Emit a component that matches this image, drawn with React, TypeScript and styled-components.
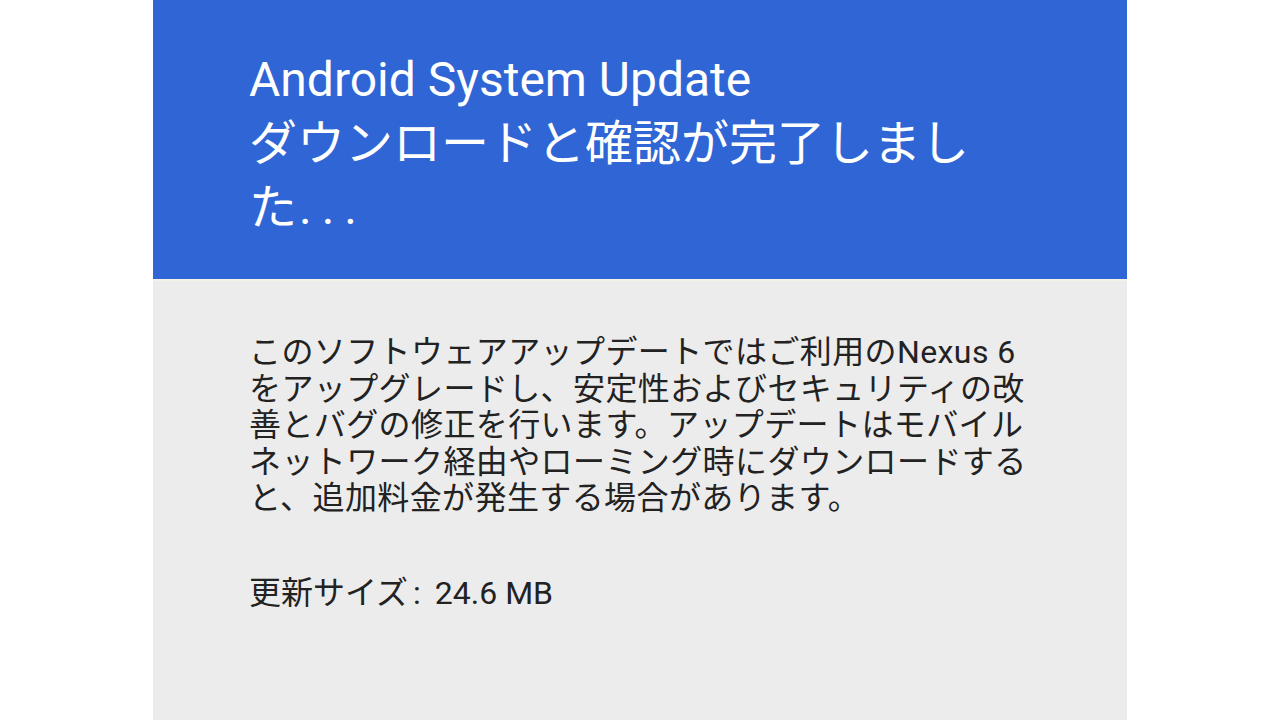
import styled, { createGlobalStyle } from 'styled-components';

const GlobalStyle = createGlobalStyle`
  html, body {
    margin: 0;
    padding: 0;
    background: #ffffff;
  }
  body {
    font-family: Roboto, "Noto Sans CJK JP", sans-serif;
  }
`;

const Page = styled.div`
  display: flex;
  justify-content: center;
  width: 1280px;
  height: 720px;
  overflow: hidden;
  background: #ffffff;
`;

const Dialog = styled.section`
  display: flex;
  flex-direction: column;
  width: 974px;
  height: 720px;
  background: #ececec;
`;

const Header = styled.header`
  box-sizing: border-box;
  height: 281px;
  padding: 48px 96px 0 96px;
  background: #2f65d5;
  border-bottom: 2px solid #f3f0e4;
  color: #ffffff;
`;

const Title = styled.h1`
  margin: 0;
  font-family: Roboto, "Noto Sans CJK JP", sans-serif;
  font-size: 48px;
  font-weight: 400;
  line-height: 64px;
`;

const NoBreak = styled.span`
  white-space: nowrap;
`;

const Dots = styled.span`
  letter-spacing: 10px;
  margin-left: 2px;
`;

const Body = styled.div`
  padding: 53px 96px 0 96px;
  color: #222222;
`;

const Paragraph = styled.p`
  margin: 0;
  font-size: 32px;
  line-height: 36.5px;
  font-weight: 400;
  letter-spacing: 0.4px;
`;

const SizeLine = styled.p`
  margin: 58px 0 0 0;
  font-size: 32px;
  line-height: 36.5px;
`;

const Colon = styled.span`
  margin: 0 14px 0 5px;
`;

export default function App() {
  return (
    <>
      <GlobalStyle />
      <Page>
        <Dialog>
          <Header>
            <Title>
              Android System Update
              <br />
              ダウンロードと確認が完了しまし
              <NoBreak>
                た<Dots>...</Dots>
              </NoBreak>
            </Title>
          </Header>
          <Body>
            <Paragraph>
              このソフトウェアアップデートではご利用のNexus 6をアップグレードし、安定性およびセキュリティの改善とバグの修正を行います。アップデートはモバイルネットワーク経由やローミング時にダウンロードすると、追加料金が発生する場合があります。
            </Paragraph>
            <SizeLine>
              更新サイズ<Colon>:</Colon>24.6 MB
            </SizeLine>
          </Body>
        </Dialog>
      </Page>
    </>
  );
}
